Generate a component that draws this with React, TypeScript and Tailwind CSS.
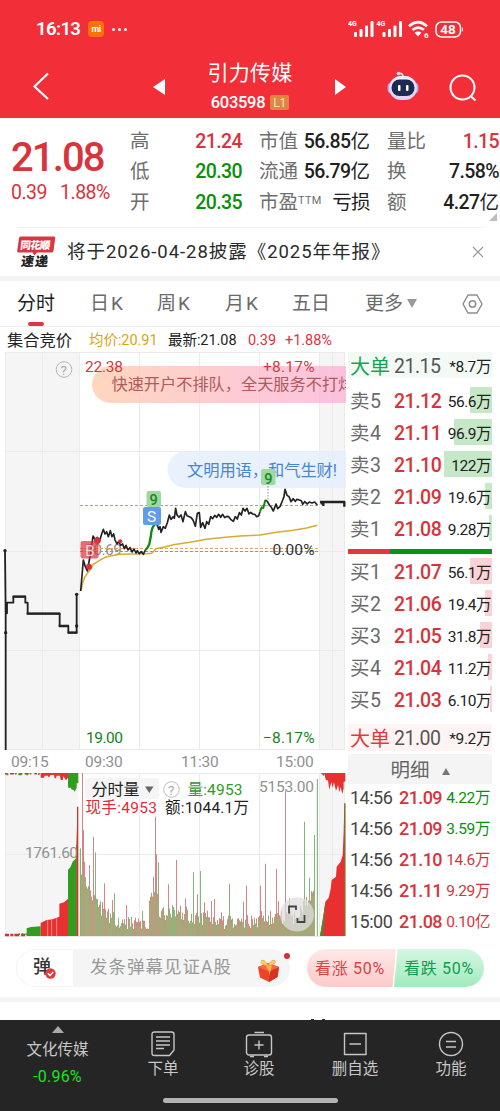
import React from "react";

type Pt = [number, number];

const PRICE_A =
  "242,573 250,480 256,500 262,513 268,480 272,462 276,430 279,408 286,420 292,412 298,425 304,405 310,388 315,402 320,395 325,410 331,392 336,410 341,402 345,420 351,432 356,424 362,436 368,432 373,446 378,436 384,450 390,443 396,456 402,447 408,459 412,452 418,461 424,455 430,463 436,450";
const PRICE_B =
  "466,370 472,375 476,388 480,380 483,397 490,380 496,385 502,368 508,345 513,358 520,350 523,355 527,325 531,345 537,352 543,345 549,365 556,335 561,347 568,350 574,353 580,362 586,379 592,340 598,338 602,382 608,368 615,385 620,365 626,373 632,350 638,356 644,346 650,352 656,343 662,352 668,343 674,353 680,349 686,350 692,358 700,364 706,350 712,357 718,338 724,345 729,325 735,333 741,325 747,342 752,337 758,342 764,343 770,350 776,347 780,335";
const PRICE_C =
  "796,300 802,304 808,315 814,322 820,333 828,312 833,326 840,320 847,303 852,290 855,268 861,286 867,290 873,305 879,296 886,304 891,298 898,300 904,302 908,313 914,305 922,312 928,306 936,309 944,306 952,315";
const AVERAGE =
  "243,573 248,548 254,532 262,520 272,508 280,492 290,487 300,480 315,472 335,467 360,463 440,461 455,460 468,446 490,442 520,434 570,427 620,418 660,413 720,408 780,405 830,397 880,391 920,384 952,376";

const SPIKES: Pt[] = [
  [246, 22], [249, 195], [252, 290], [266, 300], [278, 215], [284, 262], [311, 355], [335, 405], [341, 385], [379, 420],
  [404, 458], [427, 438], [449, 395], [464, 155], [467, 268], [473, 292], [503, 358], [527, 285], [554, 400], [580, 322],
  [591, 388], [601, 318], [613, 412], [632, 408], [641, 402], [662, 442], [686, 356], [713, 460], [728, 410], [738, 362],
  [763, 458], [781, 362], [796, 296], [829, 312], [835, 408], [856, 78], [866, 400], [911, 170], [926, 338], [941, 210], [944, 222],
];

const floorAt = (x: number) => {
  if (x < 262) return 310 + (x - 243) * 2;
  if (x < 300) return 365 + (x - 262) * 1.8;
  if (x < 350) return 425 + (x - 300) * 0.9;
  if (x < 445) return 476;
  if (x < 458) return 425 - (x - 445) * 4;
  if (x < 476) return 350 + (x - 458) * 4;
  if (x < 560) return 440;
  if (x < 640) return 455;
  if (x < 780) return 470;
  if (x < 900) return 455;
  return 440 - (x - 900) * 1.5;
};

const bars = Array.from({ length: 234 }, (_, i) => {
  const x = 243 + i * 3;
  const r = Math.abs(Math.sin(i * 127.1 + 3.7) * 43758.5453) % 1;
  const spike = SPIKES.find(([sx]) => Math.abs(sx - x) < 2);
  const top = spike ? spike[1] : Math.min(492, floorAt(x) + (r - 0.45) * 46);
  return { x, top, up: (i * 7 + Math.floor(r * 10)) % 9 < 5 };
});
const GREEN_SPIKES = [284, 341, 473, 580, 601, 686, 763, 911, 926, 941, 427];

function StatusBar() {
  return (
    <div className="flex h-[58px] items-center pl-[36px] pr-[36px] text-white">
      <span className="w-[45px] whitespace-nowrap text-[18.500px] font-semibold leading-none tracking-[-0.600px]">16:13</span>
      <span className="ml-[7px] flex h-4 w-4 items-center justify-center rounded-[4px] bg-[#f97208] text-[9px] font-bold leading-none tracking-[-0.5px]">mi</span>
      <span className="ml-[8px] flex gap-[3px]">
        <i className="h-[3px] w-[3px] rounded-full bg-white" />
        <i className="h-[3px] w-[3px] rounded-full bg-white" />
        <i className="h-[3px] w-[3px] rounded-full bg-white" />
      </span>
      <svg className="ml-auto" width="116" height="20" viewBox="0 0 116 20" fill="#fff">
        {[0, 28.5].map((o) => (
          <g key={o} transform={`translate(${o} 0)`}>
            <text x="0" y="7" fontSize="7" fontWeight="700">4G</text>
            <rect x="6" y="13" width="3" height="5" rx="1" />
            <rect x="11.500" y="10" width="3" height="8" rx="1" />
            <rect x="17" y="6.500" width="3" height="11.500" rx="1" />
            <rect x="22.500" y="2" width="3" height="16" rx="1" />
          </g>
        ))}
        <g fill="none" stroke="#fff" strokeWidth="2.6">
          <path d="M61 7.200 Q70 -0.800 79 7.200" />
          <path d="M64.500 11 Q70 6.300 76 10.800" />
        </g>
        <path d="M66.600 13.800 Q70 11 73.400 13.800 L70 17.500z" />
        <text x="76" y="18.500" fontSize="8" fontWeight="700">6</text>
        <rect x="88" y="3" width="24.500" height="15" rx="5.500" fill="none" stroke="#fff" strokeWidth="1.500" />
        <text x="92.300" y="15.400" fontSize="13.500" fontWeight="700">48</text>
        <path d="M114 8 q2 2.500 0 5z" />
      </svg>
    </div>
  );
}

function Robot() {
  return (
    <svg width="32" height="32" viewBox="0 0 32 32">
      <path d="M16 7 Q16 3 12 3.500" fill="none" stroke="#e4defa" strokeWidth="1.800" />
      <circle cx="11.500" cy="3.500" r="1.800" fill="#f4dcf2" />
      <ellipse cx="3" cy="18" rx="2.500" ry="5" fill="#b9a6ee" />
      <ellipse cx="29" cy="18" rx="2.500" ry="5" fill="#b9a6ee" />
      <rect x="2" y="6" width="28" height="24" rx="12" fill="#ddd6fb" />
      <rect x="3.500" y="6" width="25" height="20" rx="10" fill="#f0ecff" />
      <rect x="4.500" y="9.500" width="23" height="16.500" rx="8" fill="#1d2b52" />
      <rect x="11" y="15" width="2.500" height="6" rx="1" fill="#fff" />
      <rect x="19" y="15" width="2.500" height="6" rx="1" fill="#fff" />
    </svg>
  );
}

function NavBar() {
  return (
    <div className="flex h-[60px] items-center text-white">
      <svg className="ml-[32px] mt-[-4px]" width="18" height="28" viewBox="0 0 18 28" fill="none" stroke="#fff" strokeWidth="2.200">
        <path d="M16 1.500 L2.500 14.500 L16 27" />
      </svg>
      <svg className="ml-[103px] mt-[-2px]" width="12" height="16" viewBox="0 0 12 16" fill="#fff"><path d="M12 0v16L0 8z" /></svg>
      <div className="flex w-[170px] flex-col items-center">
        <div className="mt-[-5px] text-[21px] leading-[28px] tracking-[0.200px]">引力传媒</div>
        <div className="mt-[6px] flex items-center gap-[5px]">
          <span className="text-[16.500px] font-medium leading-[20px] tracking-[-0.300px]">603598</span>
          <span className="flex h-[15px] w-[19px] items-center justify-center rounded-[2px] bg-[#e0843f] text-[12px] leading-none text-[#fbe3c8]">L1</span>
        </div>
      </div>
      <svg className="mt-[-2px]" width="11" height="16" viewBox="0 0 11 16" fill="#fff"><path d="M0 0v16l11-8z" /></svg>
      <div className="ml-[41px] mt-[-4px]"><Robot /></div>
      <svg className="ml-[30px] mt-[-1px]" width="28" height="28" viewBox="0 0 28 28" fill="none" stroke="#fff" strokeWidth="2">
        <circle cx="13.500" cy="13.500" r="12" />
        <path d="M21.500 22 L26.500 26.500" />
      </svg>
    </div>
  );
}

const STATS: { w: string; rows: [React.ReactNode, string, string][] }[] = [
  { w: "w-[112px]", rows: [["高", "21.24", "text-[#d9333c]"], ["低", "20.30", "text-[#0a8f0a]"], ["开", "20.35", "text-[#0a8f0a]"]] },
  {
    w: "w-[111px] ml-[17px]",
    rows: [
      ["市值", "56.85亿", "text-[#1f1f1f]"],
      ["流通", "56.79亿", "text-[#1f1f1f]"],
      [<>市盈<span className="relative top-[-5px] text-[11px] tracking-[0.3px]">TTM</span></>, "亏损", "text-[#1f1f1f]"],
    ],
  },
  { w: "w-[112px] ml-[17px]", rows: [["量比", "1.15", "text-[#d9333c]"], ["换", "7.58%", "text-[#1f1f1f]"], ["额", "4.27亿", "text-[#1f1f1f]"]] },
];

function Summary() {
  return (
    <div className="relative flex h-[109px] pt-[8px]">
      <div className="w-[130px] shrink-0 pl-[11px] text-[#d9333c]">
        <div className="pt-[12px] text-[40px] font-medium leading-[40px] tracking-[-1.900px]">21.08</div>
        <div className="mt-[3px] flex gap-[13px] text-[19.500px] leading-[24px] tracking-[-0.500px]">
          <span>0.39</span><span>1.88%</span>
        </div>
      </div>
      {STATS.map((c, i) => (
        <div key={i} className={`shrink-0 ${c.w}`}>
          {c.rows.map(([k, v, color], j) => (
            <div key={j} className="flex h-[30.500px] items-center justify-between whitespace-nowrap">
              <span className="text-[19.500px] leading-none text-[#6e6e6e]">{k}</span>
              <span className={`text-[19.500px] leading-none tracking-[-0.600px] ${v === "亏损" ? "font-normal" : "font-medium"} ${color}`}>
                {v.replace("亿", "")}
                {v.endsWith("亿") && <span className="font-normal tracking-normal">亿</span>}
              </span>
            </div>
          ))}
        </div>
      ))}
      <svg className="absolute bottom-[6px] right-[3px]" width="8" height="8" viewBox="0 0 8 8"><path d="M8 0v8H0z" fill="#bdbdbd" /></svg>
    </div>
  );
}

function Notice() {
  return (
    <div className="mx-4 flex h-[49px] items-center border-t border-[#f0f0f0]">
      <svg width="40" height="34" viewBox="0 0 40 34">
        <path d="M4.500 1.500 H38 Q39.500 1.500 39.200 3 L37.500 16 Q37 17.500 35.500 17.500 H21 L18.500 20.500 L16.500 17.500 H2.500 Q.8 17.500 1.200 16 L3 3 Q3.300 1.500 4.500 1.500z" fill="#da3840" />
        <text x="5.500" y="13.800" fontSize="10.500" fontWeight="800" fill="#fff" transform="skewX(-6)" textLength="30">同花顺</text>
        <text x="9" y="31.500" fontSize="13" fontWeight="900" fill="#222" transform="skewX(-8)" textLength="27">速递</text>
      </svg>
      <span className="ml-[11px] whitespace-nowrap text-[18.500px] leading-none tracking-[0.950px] text-[#2a2a2a]">将于2026-04-28披露《2025年年报》</span>
      <svg className="ml-auto" width="12" height="12" viewBox="0 0 12 12" stroke="#999" strokeWidth="1.200"><path d="M1 1l10 10M11 1L1 11" /></svg>
    </div>
  );
}

function Tabs() {
  return (
    <div className="flex h-[46px] items-center border-b border-[#eee] pl-[17px] text-[19px] leading-none text-[#6a6a6a]">
      <div className="relative w-[73px] text-[#1c1c1c]">
        分时
        <i className="absolute left-[11px] top-[28px] h-[4px] w-[16px] rounded-full bg-[#dc3540]" />
      </div>
      <div className="w-[67px] tracking-[2px]">日K</div>
      <div className="w-[68px] tracking-[2px]">周K</div>
      <div className="w-[67px] tracking-[2px]">月K</div>
      <div className="w-[73px]">五日</div>
      <div className="flex items-center">
        更多
        <svg className="ml-[4px]" width="10" height="9" viewBox="0 0 10 9" fill="#999"><path d="M0 0h10L5 9z" /></svg>
      </div>
      <svg className="ml-[45px]" width="21" height="20" viewBox="0 0 21 20" fill="none" stroke="#8e8e8e" strokeWidth="1.500" strokeLinejoin="round">
        <path d="M6 1h9l5 9-5 9H6l-5-9z" />
        <circle cx="10.500" cy="10" r="3.200" />
      </svg>
    </div>
  );
}

function Legend() {
  return (
    <div className="flex h-[25px] items-center whitespace-nowrap pl-[7px] pt-[3px] text-[14.500px] leading-none tracking-[-0.050px] text-[#222]">
      <span className="w-[82px] text-[16.300px]">集合竞价</span>
      <span className="w-[79px] text-[#dba512]">均价:20.91</span>
      <span className="w-[80px]">最新:21.08</span>
      <span className="w-[37px] text-[#d9333c]">0.39</span>
      <span className="text-[#d9333c]">+1.88%</span>
    </div>
  );
}

function PriceChart() {
  return (
    <svg className="block" width="346" height="398" viewBox="0 0 346 398">
      <defs>
        <linearGradient id="promo" x1="0" x2="1">
          <stop offset="0" stopColor="#ffc9a8" />
          <stop offset=".55" stopColor="#fdbac4" />
          <stop offset="1" stopColor="#fdb0d6" />
        </linearGradient>
      </defs>
      <rect x="5.500" width="74" height="398" fill="#f5f5f5" />
      <rect x="319.500" width="25.500" height="398" fill="#f5f5f5" />
      <g stroke="#ebebeb" strokeWidth="1">
        {[0.5, 99.5, 199.500, 298.500, 397.500].map((y) => <path key={y} d={`M5 ${y}H345`} />)}
        {[5.5, 42.5, 79.500, 139.500, 199.500, 259.500, 319.500, 332.500, 344.500].map((x) => <path key={x} d={`M${x} 0V398`} />)}
      </g>
      <path d="M346 14 H110.500 a18.500 18.500 0 0 0 0 37 H346z" fill="url(#promo)" fillOpacity=".75" />
      <path d="M346 99 H186 a18.500 18.500 0 0 0 0 37 H346z" fill="#e4eefb" fillOpacity=".85" />
      <text x="111.500" y="38" fontSize="16.200" fill="#b05a5c">快速开户不排队，全天服务不打烊</text>
      <text x="187" y="124" fontSize="16.300" fill="#4a86cf" textLength="150">文明用语，和气生财!</text>
      <g fontSize="15.500">
        <text x="85" y="19.500" fill="#d13a40" textLength="38">22.38</text>
        <text x="263" y="19.500" fill="#d13a40" textLength="51.500">+8.17%</text>
        <text x="86" y="390.500" fill="#178217" textLength="37">19.00</text>
        <text x="263" y="390.500" fill="#178217" textLength="51.500">−8.17%</text>
        <text x="85" y="202.500" fill="#8d8d8d" textLength="37">20.69</text>
      </g>
      <circle cx="64" cy="17.500" r="7.800" fill="none" stroke="#b5b5b5" />
      <text x="60.500" y="22.500" fontSize="13.500" fill="#aaa">?</text>
      <g fill="none" strokeWidth="1" strokeDasharray="3 2">
        <path d="M80 153.500H319" stroke="#c49b7b" />
        <path d="M80 196.500H319" stroke="#d9a866" />
        <path d="M80 199.500H319" stroke="#b98a6f" />
      </g>
      <path d="M268 134V148" stroke="#888" strokeDasharray="1.500 1.500" />
      <g transform="translate(0 48) scale(.33333)" fill="none" strokeLinejoin="round">
        <polyline points={AVERAGE} stroke="#dba92e" strokeWidth="4.500" />
        <polyline points={PRICE_A} stroke="#232323" strokeWidth="5" />
        <polyline points={PRICE_B} stroke="#232323" strokeWidth="5" />
        <polyline points={PRICE_C} stroke="#232323" strokeWidth="5" />
        <polyline points="436,450 442,444 448,432 452,412 454,396 458,382 466,370" stroke="#0e8a12" strokeWidth="7" />
        <polyline points="780,335 785,322 790,324 796,300" stroke="#0e8a12" strokeWidth="6" />
        <circle cx="292" cy="422" r="10" fill="#dd2f3a" />
        <circle cx="267" cy="500" r="9" fill="#dd2f3a" />
        <circle cx="361" cy="424" r="6" fill="#dd2f3a" />
        <polyline points="15,452 17,640 17,1194 17,640 21,640 21,608 40,608 40,590 76,590 76,608 83,608 83,641 179,641 179,678 205,678 205,698 230,698 230,583" stroke="#222" strokeWidth="5.500" />
        <path d="M38 590H78M80 641H181M176 678H207M203 698H232" stroke="#222" strokeWidth="7" />
        <g fill="#222">
          <circle cx="15" cy="452" r="5" />
          <circle cx="17" cy="698" r="5" />
          <circle cx="17" cy="1189" r="5" />
          <circle cx="230" cy="583" r="5" />
          <circle cx="230" cy="678" r="5" />
        </g>
        <path d="M960 306H1033V320M962 310H970V318" stroke="#222" strokeWidth="7" />
      </g>
      <rect x="80.500" y="189" width="18" height="17.500" rx="2" fill="#db3640" fillOpacity=".72" />
      <text x="85" y="203.500" fontSize="15.500" fill="#fff" fillOpacity=".75">B</text>
      <rect x="146.500" y="139" width="14.500" height="16" rx="2" fill="#a2d7a3" />
      <rect x="143" y="155" width="18" height="18" rx="2" fill="#629be8" />
      <rect x="261" y="117" width="14.500" height="16" rx="2" fill="#a2d7a3" />
      <text x="149.600" y="153.300" fontSize="14.500" fontWeight="500" fill="#148a18">9</text>
      <text x="264.200" y="131.500" fontSize="14.500" fontWeight="500" fill="#148a18">9</text>
      <text x="147" y="169.500" fontSize="15.500" fill="#fff">S</text>
      <text x="272.500" y="202.500" fontSize="15.500" fill="#333" textLength="42">0.00%</text>
    </svg>
  );
}

function VolumeChart() {
  return (
    <svg className="block" width="346" height="164" viewBox="0 0 346 164">
      <rect x="5.500" width="72.500" height="164" fill="#f5f5f5" />
      <rect x="319.500" width="25.500" height="164" fill="#f5f5f5" />
      <g stroke="#ebebeb">
        <path d="M5 .5H345M5 81.500H345M5 163.500H345" />
        {[5.5, 42.5, 139.500, 199.500, 259.500, 319.500, 332.500, 344.500].map((x) => <path key={x} d={`M${x} 0V164`} />)}
      </g>
      <g transform="translate(0 -8) scale(.33333)">
        <path d="M15 26H120" stroke="#d83035" strokeWidth="5" strokeDasharray="8 7 12 3 5 9" />
        <path d="M20 28H118" stroke="#319c1d" strokeWidth="6" strokeDasharray="5 30 10 14" />
        <path d="M122 24V38H132L134 32H144L146 38L152 30H162L164 40H168L170 32H180L182 45H188L190 34L198 46L204 38V24z" fill="#e93030" />
        <path d="M204 24V68H212L216 74H220L224 80L230 68V55H235V24z" fill="#319c1d" />
        <path d="M15 510H75" stroke="#d83035" strokeWidth="8" strokeDasharray="12 4 9 3 14 6" />
        <path d="M56 508H80" stroke="#319c1d" strokeWidth="6" strokeDasharray="4 6" />
        <path d="M80 513V490L92 486L122 484V513z" fill="#319c1d" />
        <path d="M122 513V474L138 466L160 462L178 455V416L192 412L204 402V513z" fill="#e93030" />
        <path d="M143 466V513M155 464V513M170 460V513" stroke="#fff" strokeOpacity=".65" strokeWidth="2" />
        <path d="M204 513V315L212 305L218 290L228 280V240H230V513z" fill="#319c1d" />
        <path d="M229 513V240L231 180V125H235V513z" fill="#c8382c" />
        <path d="M241 250V513" stroke="#5ba75b" strokeWidth="3" />
        {bars.map((b) => {
          const green = GREEN_SPIKES.some((g) => Math.abs(g - b.x) < 2);
          const tall = SPIKES.some(([sx]) => Math.abs(sx - b.x) < 2);
          const up = tall ? !green : b.up;
          return <rect key={b.x} x={b.x} y={b.top} width="3" height={513 - b.top} fill={up ? "#d98484" : "#84b67a"} />;
        })}
        {bars.map((b) => {
          const t = Math.max(b.top + 6, floorAt(b.x) + 8);
          return t < 513 ? <rect key={b.x} x={b.x} y={t} width="3" height={513 - t} fill="#a3ae78" fillOpacity=".6" /> : null;
        })}
        <path d="M952 42V513" stroke="#6eac6e" strokeWidth="3" />
        <path d="M960 513L966 478L972 440L976 410L986 398L992 372L995 345L1008 335L1010 305L1022 290L1028 270L1031 200L1033 115H1036V513z" fill="#e93030" />
        <path d="M960 513L966 478L972 440L976 410V425L970 513z" fill="#56862a" />
        <path d="M1034.500 115V513" stroke="#56862a" strokeWidth="3" />
        <path d="M962 24H972V34L966 28z" fill="#319c1d" />
        <path d="M972 24L978 46H984L988 74L994 50L998 68L1002 52L1008 78L1014 60L1018 82L1022 66L1027 87L1031 70V50H1036V24z" fill="#e93030" />
      </g>
      <rect x="85" y="5" width="74" height="21" rx="2" fill="#f5f5f5" />
      <text x="91.500" y="22" fontSize="16" fill="#222">分时量</text>
      <path d="M145 13.500h8.500l-4.200 6.500z" fill="#666" />
      <circle cx="171.500" cy="16.500" r="7.800" fill="none" stroke="#bbb" />
      <text x="168" y="21.500" fontSize="13.500" fill="#aaa">?</text>
      <g fontSize="15.500">
        <text x="187.500" y="21.500" fill="#2f9a24" textLength="55">量:4953</text>
        <text x="85.500" y="39.500" fill="#e02d36" textLength="71.500">现手:4953</text>
        <text x="165" y="39.500" fill="#222" textLength="84">额:1044.1万</text>
        <text x="259" y="19" fill="#919191" textLength="55">5153.00</text>
        <text x="25" y="85" fill="#919191" textLength="53">1761.60</text>
      </g>
      <circle cx="297" cy="141.500" r="17" fill="#ddd" fillOpacity=".75" />
      <path d="M289 140.500V133.500H296V137M297.500 145V149H304.500V142" fill="none" stroke="#444" strokeWidth="1.800" />
    </svg>
  );
}

function OrderRow({ k, p, v, bar, tint }: { k: string; p: string; v: string; bar: string; tint: string }) {
  return (
    <div className="mb-[5px] flex h-[27px] items-center whitespace-nowrap leading-none">
      <span className="w-[46px] pl-[2px] pt-[5px] text-[19.500px] tracking-[0.500px] text-[#6a6a6a]">{k}</span>
      <span className="pt-[5px] text-[19.500px] font-medium tracking-[-0.500px] text-[#d9333c]">{p}</span>
      <span className="relative ml-auto flex h-[27px] items-center pr-[1px] text-[15.500px] tracking-[-0.500px] text-[#222]">
        <i className={`absolute right-0 top-[1px] h-[26px] ${bar} ${tint}`} />
        <span className="relative pt-[6px]">{v}</span>
      </span>
    </div>
  );
}

function BigOrder({ p, v, cls, bg }: { p: string; v: string; cls: string; bg: string }) {
  return (
    <div className={`flex h-[27px] items-center whitespace-nowrap pt-[3px] leading-none ${bg}`}>
      <span className={`w-[46px] pl-[2px] text-[20px] ${cls}`}>大单</span>
      <span className="text-[19.500px] tracking-[-0.500px] text-[#555]">{p}</span>
      <span className="ml-auto pr-[1px] pt-[2px] text-[15.500px] tracking-[-0.400px] text-[#222]">*{v}</span>
    </div>
  );
}

const SELLS = [
  ["卖5", "21.12", "56.6万", "w-[22px]"],
  ["卖4", "21.11", "96.9万", "w-[38px]"],
  ["卖3", "21.10", "122万", "w-[48px]"],
  ["卖2", "21.09", "19.6万", "w-[7px]"],
  ["卖1", "21.08", "9.28万", "w-[3px]"],
];
const BUYS = [
  ["买1", "21.07", "56.1万", "w-[22px]"],
  ["买2", "21.06", "19.4万", "w-[7px]"],
  ["买3", "21.05", "31.8万", "w-[12px]"],
  ["买4", "21.04", "11.2万", "w-[4px]"],
  ["买5", "21.03", "6.10万", "w-[2px]"],
];
const DEALS = [
  ["14:56", "21.09", "4.22万", "text-[#0a8f0a]"],
  ["14:56", "21.09", "3.59万", "text-[#0a8f0a]"],
  ["14:56", "21.10", "14.6万", "text-[#d9333c]"],
  ["14:56", "21.11", "9.29万", "text-[#d9333c]"],
  ["15:00", "21.08", "0.10亿", "text-[#d9333c]"],
];

function OrderBook() {
  return (
    <div className="ml-[2px] flex h-[585px] w-[144px] flex-col">
      <BigOrder p="21.15" v="8.7万" cls="text-[#12a653]" bg="bg-[#f3faf6]" />
      <div className="mt-[8px]">
        {SELLS.map(([k, p, v, bar]) => <OrderRow key={k} k={k} p={p} v={v} bar={bar} tint="bg-[#c5e8c6]" />)}
      </div>
      <div className="mt-[3px] flex h-[5px] shrink-0">
        <i className="w-[42px] bg-[#e03a3e]" />
        <i className="flex-1 bg-[#0a930f]" />
      </div>
      <div className="mt-[3px]">
        {BUYS.map(([k, p, v, bar]) => <OrderRow key={k} k={k} p={p} v={v} bar={bar} tint="bg-[#fbd3d6]" />)}
      </div>
      <div className="mt-[7px]"><BigOrder p="21.00" v="9.2万" cls="text-[#e03a3e]" bg="bg-[#fef4f3]" /></div>
      <div className="mt-[3px] flex h-[30px] shrink-0 items-center justify-center bg-[#f4f4f4] pt-[4px] text-[19.500px] leading-none text-[#666]">
        明细
        <svg className="ml-[12px]" width="8" height="7" viewBox="0 0 8 7" fill="#777"><path d="M4 0l4 7H0z" /></svg>
      </div>
      <div className="mt-[-2px]">
        {DEALS.map(([t, p, v, c], i) => (
          <div key={i} className="flex h-[31px] items-center whitespace-nowrap pl-[2px] pt-[1px] leading-none">
            <span className="w-[49px] text-[18px] tracking-[-0.500px] text-[#444]">{t}</span>
            <span className="text-[18px] font-medium tracking-[-0.600px] text-[#d9333c]">{p}</span>
            <span className={`ml-auto pr-[2px] pt-[1px] text-[15.500px] tracking-[-0.400px] ${c}`}>{v}</span>
          </div>
        ))}
      </div>
    </div>
  );
}

function Danmu() {
  return (
    <div className="flex h-[60px] items-start pl-[16px] pt-[12px]">
      <div className="relative flex h-[38px] w-[274px] items-center rounded-full border border-[#f6f6f6] bg-[#f5f5f5]">
        <div className="flex h-full w-[56px] items-center justify-center rounded-l-full bg-white">
          <span className="relative ml-[-6px] mt-[-3px] text-[18px] font-medium leading-none text-[#333]">
            弹
            <svg className="absolute left-[12px] top-[10px]" width="11" height="11" viewBox="0 0 11 11">
              <circle cx="5.500" cy="5.500" r="5.200" fill="#dc3d3d" />
              <path d="M2.800 5.300L5 7.500L8.300 4" fill="none" stroke="#fff" strokeWidth="1.400" />
            </svg>
          </span>
        </div>
        <span className="ml-[17px] whitespace-nowrap text-[17.500px] leading-none tracking-[1px] text-[#999]">发条弹幕见证A股</span>
        <svg className="absolute left-[240px] top-[8px]" width="23" height="25" viewBox="0 0 23 25">
          <path d="M1 9L11 5L22 9L20.500 19L12 24L3 19.500z" fill="#ee4328" />
          <path d="M12 13V24L20.500 19L22 9z" fill="#d63421" />
          <path d="M1 9L11 5L22 9L12 13.500z" fill="#f9683c" />
          <path d="M9 8L12 13.500V18L15 8z" fill="#f7b24a" />
          <path d="M11 8Q2 6 4.500 2.500Q8 1 11 8Q14 1 18 2.500Q20 6 11 8z" fill="#f8cd6c" stroke="#efa743" strokeWidth=".8" />
        </svg>
        <i className="absolute left-[267px] top-[3px] h-[6px] w-[6px] rounded-full bg-[#d72e3d]" />
      </div>
      <div className="ml-[17px] flex h-[38px] text-[16px] leading-[39px]">
        <div className="w-[89px] whitespace-nowrap rounded-l-full bg-gradient-to-b from-[#fde9e8] to-[#fcc9c9] pl-[8px] tracking-[0.700px] text-[#dc4044] [clip-path:polygon(0_0,100%_0,96%_100%,0_100%)]">看涨 50%</div>
        <div className="ml-[-2px] w-[90px] whitespace-nowrap rounded-r-full bg-gradient-to-b from-[#d5f6e3] to-[#a0ebbd] pl-[10px] tracking-[0.700px] text-[#129b50] [clip-path:polygon(4%_0,100%_0,100%_100%,0_100%)]">看跌 50%</div>
      </div>
    </div>
  );
}

function BottomItem({ label, children }: { label: string; children: React.ReactNode }) {
  return (
    <div className="flex w-[96px] flex-col items-center pt-[10px]">
      <svg width="28" height="28" viewBox="0 0 28 28" fill="none" stroke="#c6c6c6" strokeWidth="1.400" strokeLinejoin="round">{children}</svg>
      <span className="mt-[3px] text-[15.500px] leading-[16px] text-[#c8c8c8]">{label}</span>
    </div>
  );
}

function BottomBar() {
  return (
    <div className="flex h-[91px] flex-col bg-[#252525]">
      <div className="flex h-[73px]">
        <div className="flex w-[115px] flex-col items-center pt-[6px]">
          <svg width="12" height="7" viewBox="0 0 12 7" fill="#aaa"><path d="M6 0l6 7H0z" /></svg>
          <span className="mt-[9px] text-[15.500px] leading-[16px] text-[#c8c8c8]">文化传媒</span>
          <span className="mt-[11px] text-[16px] leading-[16px] tracking-[0.200px] text-[#1ee21e]">-0.96%</span>
        </div>
        <BottomItem label="下单">
          <path d="M5.500 2H22.500Q25 2 25 4.500V20L20.500 25.500H5.500Q3 25.500 3 23V4.500Q3 2 5.500 2zM7 7H21M7 11H21M7 15H21M7 18.500H15" />
        </BottomItem>
        <BottomItem label="诊股">
          <rect x="1.500" y="5" width="25" height="20" rx="2.500" />
          <path d="M9.500 2.500H19M14 10.500V19.500M9.500 15H18.500M5 26.500H9M19 26.500H23" />
        </BottomItem>
        <BottomItem label="删自选">
          <path d="M3.500 3.500H25V24.500H3.500zM8.500 14H20" />
        </BottomItem>
        <BottomItem label="功能">
          <circle cx="14" cy="14" r="11.500" />
          <path d="M9 11.500H19M9 17H19" />
        </BottomItem>
      </div>
      <div className="mx-auto mt-[5px] h-[5px] w-[175px] rounded-full bg-[#b3b3b3]" />
    </div>
  );
}

export default function App() {
  return (
    <div className="h-[1111px] w-[500px] overflow-hidden bg-white font-['Roboto','Noto_Sans_CJK_SC',sans-serif]">
      <div className="h-[118px] bg-[#f22f38]">
        <StatusBar />
        <NavBar />
      </div>
      <Summary />
      <Notice />
      <div className="h-[5px] bg-[#f4f4f4]" />
      <Tabs />
      <Legend />
      <div className="flex h-[585px]">
        <div className="w-[346px] shrink-0">
          <PriceChart />
          <div className="flex h-[23px] items-center pt-[2px] text-[15.500px] leading-none tracking-[-0.200px] text-[#8f8f8f]">
            <span className="w-[74px] pl-[11px]">09:15</span>
            <span className="w-[107px] pl-[11px]">09:30</span>
            <span className="w-[95px]">11:30</span>
            <span>15:00</span>
          </div>
          <VolumeChart />
        </div>
        <OrderBook />
      </div>
      <Danmu />
      <div className="h-[5px] bg-[#f4f4f4]" />
      <div className="flex h-[18px] items-end">
        <i className="ml-[311px] h-[1px] w-[3px] bg-[#333]" />
        <i className="ml-[8px] h-[1px] w-[3px] bg-[#333]" />
      </div>
      <BottomBar />
    </div>
  );
}
